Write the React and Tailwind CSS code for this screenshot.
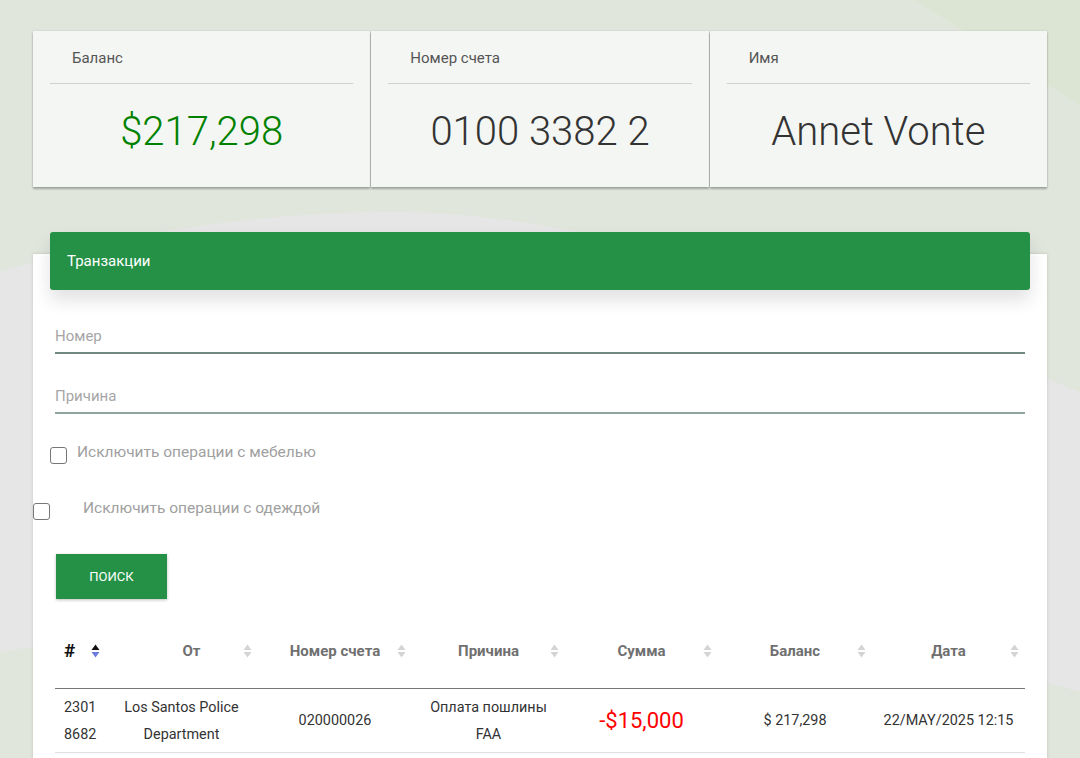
import React from 'react';

const font = { fontFamily: 'Roboto, "Noto Sans", sans-serif' };

const SortIcon = ({ active = false }) => (
  <svg width="9" height="14" viewBox="0 0 9 14" className="block">
    <path d="M4.5 0.5 L8.5 6 L0.5 6 Z" fill={active ? '#111111' : '#d4d4d4'} />
    <path d="M4.5 13.5 L8.5 8 L0.5 8 Z" fill={active ? '#6c7ae0' : '#d4d4d4'} />
  </svg>
);

const InfoCard = ({ label, value, valueClass }) => (
  <div className="flex-1 bg-[#f4f6f3] shadow-[0_2px_2px_rgba(0,0,0,0.28),0_0_2px_rgba(0,0,0,0.12)] px-[17px] h-[156px]">
    <div className="h-[53px] pt-[19px] leading-[16px] pl-[22px] text-[15px] text-[#555] border-b border-[#cfd1ce]">
      {label}
    </div>
    <div className={`text-center text-[40px] leading-none pt-[28px] ${valueClass}`}>{value}</div>
  </div>
);

const Field = ({ placeholder, lineClass, className }) => (
  <div className={`h-[33px] flex items-center text-[15px] text-[#a6a6a6] ${lineClass} ${className}`}>
    {placeholder}
  </div>
);

const Checkbox = () => (
  <span className="block w-[17px] h-[17px] rounded-[3px] border border-[#777] bg-white" />
);

const columns = [
  { key: '#', w: 'w-[60px]' },
  { key: 'От', w: 'w-[143px] pl-[10px]' },
  { key: 'Номер счета', w: 'w-[154px]' },
  { key: 'Причина', w: 'w-[153px]' },
  { key: 'Сумма', w: 'w-[153px]' },
  { key: 'Баланс', w: 'w-[154px]' },
  { key: 'Дата', w: 'w-[153px]' },
];

export default function App() {
  return (
    <div className="relative min-h-[758px] overflow-hidden bg-[#e0e6dc]" style={font}>
      {/* background waves */}
      <svg className="absolute top-0 left-0 w-full h-[758px]" viewBox="0 0 1080 758" preserveAspectRatio="none">
        <path d="M915 0 L1080 0 L1080 105 Z" fill="#dce5d3" />
        <path
          d="M0 272 C140 228 270 212 400 212 C600 214 850 300 1080 392 L1080 692 C820 610 300 600 0 652 Z"
          fill="#e6e6e6"
        />
      </svg>

      <div className="relative px-[33px] pt-[31px] pb-10">
        {/* top cards */}
        <div className="flex gap-px">
          <InfoCard label="Баланс" value="$217,298" valueClass="font-light text-[#008200]" />
          <InfoCard label="Номер счета" value="0100 3382 2" valueClass="font-light text-[#333]" />
          <InfoCard label="Имя" value="Annet Vonte" valueClass="font-light text-[#333]" />
        </div>

        {/* transactions panel */}
        <div className="flow-root mt-[67px] bg-white shadow-[0_0_3px_rgba(0,0,0,0.15)] pb-16">
          <div className="-mt-[22px] mx-[17px] h-[58px] flex items-center px-[17px] bg-[#249147] rounded-[3px] text-white text-[15px] shadow-[0_10px_18px_rgba(0,0,0,0.12)]">
            Транзакции
          </div>

          <div className="px-[22px]">
            <Field placeholder="Номер" lineClass="border-b-2 border-[#71897e]" className="mt-[31px]" />
            <Field placeholder="Причина" lineClass="border-b-2 border-[#8fa69c]" className="mt-[27px]" />
          </div>

          <div className="mt-[32px] pl-[17px] flex items-start gap-[10px]">
            <div className="mt-[1px]"><Checkbox /></div>
            <span className="text-[15.5px] leading-[12px] text-[#a0a0a0]">Исключить операции с мебелью</span>
          </div>
          <div className="mt-[39px] flex items-start">
            <Checkbox />
            <span className="ml-[33px] text-[15.5px] leading-[12px] mt-[-1px] text-[#a0a0a0]">Исключить операции с одеждой</span>
          </div>

          <div className="mt-[34px] pl-[23px]">
            <button className="w-[111px] h-[45px] bg-[#249147] text-white text-[13px] uppercase shadow-[0_1px_3px_rgba(0,0,0,0.25)]">
              Поиск
            </button>
          </div>

          {/* table */}
          <div className="mt-[22px] px-[22px]">
            <div className="flex border-b border-[#777]">
              {columns.map((c, i) => (
                <div key={c.key} className={`${c.w} relative h-[67px] pb-[7px] flex items-center ${i === 0 ? 'pl-[9px]' : 'justify-center'}`}>
                  {i === 0 ? (
                    <span className="text-[19px] font-bold text-[#111]">#</span>
                  ) : (
                    <span className="text-[15px] font-bold text-[#707070]">{c.key}</span>
                  )}
                  <span className={`absolute top-[23px] ${i === 0 ? 'left-[36px]' : 'right-[6px]'}`}>
                    <SortIcon active={i === 0} />
                  </span>
                </div>
              ))}
            </div>
            <div className="flex border-b border-[#e0e0e0] h-[64px] items-center text-[14.4px] leading-[27px] text-[#333]">
              <div className="w-[60px] pl-[9px]">2301<br />8682</div>
              <div className="w-[143px] text-center pr-[10px]">Los Santos Police<br />Department</div>
              <div className="w-[154px] text-center">020000026</div>
              <div className="w-[153px] text-center">Оплата пошлины<br />FAA</div>
              <div className="w-[153px] text-center text-[22px] text-[#ff0000]">-$15,000</div>
              <div className="w-[154px] text-center">$ 217,298</div>
              <div className="w-[153px] text-center">22/MAY/2025 12:15</div>
            </div>
          </div>
        </div>
      </div>
    </div>
  );
}
